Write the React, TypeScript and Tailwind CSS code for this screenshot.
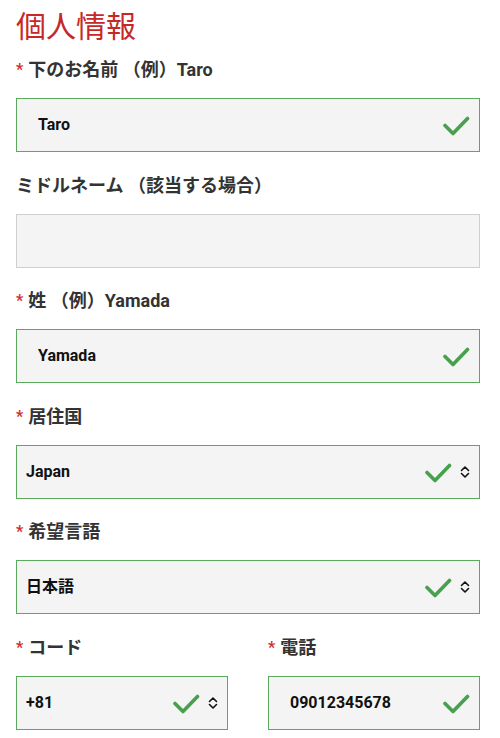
import React from 'react';

const font = { fontFamily: 'Roboto, "Noto Sans CJK JP", sans-serif' };

const Check = () => (
  <svg width="28" height="24" viewBox="0 0 28 24" fill="none" className="shrink-0">
    <path d="M3 12.5 L11 20.5 L25.5 5.5" stroke="#47a04b" strokeWidth="3.6" strokeLinecap="round" strokeLinejoin="round" />
  </svg>
);

const UpDown = () => (
  <svg width="10" height="14" viewBox="0 0 10 14" fill="none" className="shrink-0">
    <path d="M1.5 5.5 L5 2 L8.5 5.5 M1.5 8.5 L5 12 L8.5 8.5" stroke="#111" strokeWidth="1.6" strokeLinecap="round" strokeLinejoin="round" />
  </svg>
);

const Label = ({ text, required = true }: { text: string; required?: boolean }) => (
  <div className="flex items-center h-6 mb-4 text-[18px] leading-6 font-bold text-[#333]">
    {required && <span className="text-[#d32f2f] text-[16px] mr-[5px]">*</span>}
    <span>{text}</span>
  </div>
);

const TextBox = ({ value, valid = true }: { value: string; valid?: boolean }) => (
  <div
    className={`flex items-center h-[54px] bg-[#f4f4f4] border pl-[21px] pr-[9px] ${
      valid ? 'border-[#5aa95d]' : 'border-[#cfcfcf]'
    }`}
  >
    <span className="flex-1 text-[16px] font-bold text-[#111]">{value}</span>
    {valid && <Check />}
  </div>
);

const SelectBox = ({ value }: { value: string }) => (
  <div className="flex items-center h-[54px] bg-[#f4f4f4] border border-[#5aa95d] pl-[9px] pr-[9px]">
    <span className="flex-1 text-[16px] font-bold text-[#111]">{value}</span>
    <Check />
    <span className="ml-[8px]">
      <UpDown />
    </span>
  </div>
);

export default function App() {
  return (
    <div className="bg-white min-h-[738px] pl-4 pr-5 pt-[7px]" style={font}>
      <h1 className="text-[30px] leading-[40px] text-[#c62828] font-normal mb-[11px]">個人情報</h1>

      <Label text="下のお名前 （例）Taro" />
      <TextBox value="Taro" />

      <div className="mt-[21.6px]">
        <Label text="ミドルネーム （該当する場合）" required={false} />
        <TextBox value="" valid={false} />
      </div>

      <div className="mt-[21.6px]">
        <Label text="姓 （例）Yamada" />
        <TextBox value="Yamada" />
      </div>

      <div className="mt-[21.6px]">
        <Label text="居住国" />
        <SelectBox value="Japan" />
      </div>

      <div className="mt-[21.6px]">
        <Label text="希望言語" />
        <SelectBox value="日本語" />
      </div>

      <div className="mt-[21.6px] grid grid-cols-2 gap-x-10">
        <div>
          <Label text="コード" />
          <SelectBox value="+81" />
        </div>
        <div>
          <Label text="電話" />
          <TextBox value="09012345678" />
        </div>
      </div>
    </div>
  );
}
